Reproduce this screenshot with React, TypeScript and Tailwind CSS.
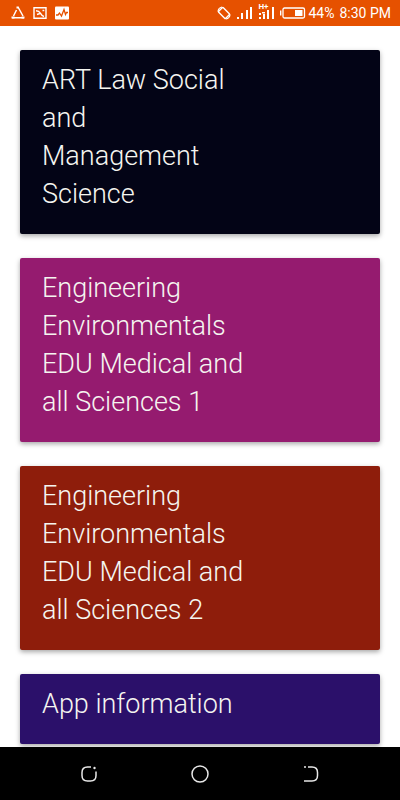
import React from "react";

type Category = { title: string; color: string };

const categories: Category[] = [
  { title: "ART Law Social and Management Science", color: "bg-[#030416]" },
  { title: "Engineering Environmentals EDU Medical and all Sciences 1", color: "bg-[#951b6f]" },
  { title: "Engineering Environmentals EDU Medical and all Sciences 2", color: "bg-[#8e1d0b]" },
  { title: "App information", color: "bg-[#2b106a]" },
];

function StatusBar() {
  return (
    <header className="flex h-[26px] shrink-0 items-center justify-between bg-[#e65100] pr-[9px] pl-[11px] text-white">
      <div className="flex items-center gap-2">
        <svg className="h-[14px] w-[14px]" viewBox="0 0 14 14" fill="none" stroke="currentColor">
          <path d="M7 1 12 10M5.500 4 2.500 10M1 11.700h12" strokeWidth="1.500" />
          <path d="M5.500 1.500h2.200M0.500 11.500h3M10.500 11.500h3" strokeWidth="2" />
        </svg>
        <svg className="h-[14px] w-[14px]" viewBox="0 0 14 14" fill="none" stroke="currentColor" strokeWidth="1.400">
          <path d="M1 1.700h12v10.600H1z" />
          <path d="M3 4.800c2.500 0 3.500.8 4.300 2.200S9 10 11 10.500" />
          <path d="M9.500 4.500h1.800M7 7.500 4 8.500" />
        </svg>
        <svg className="h-[14px] w-[14px]" viewBox="0 0 14 14" fill="none">
          <rect width="14" height="13" y="0.500" rx="1" fill="currentColor" />
          <path d="M1 9h2l1.500-2 2 3L9 3.500l1.500 5L11.500 6.500H13" stroke="#e65100" strokeWidth="1.300" />
        </svg>
      </div>
      <div className="flex items-center">
        <svg className="h-[14px] w-[14px]" viewBox="0 0 14 14" fill="none" stroke="currentColor" strokeWidth="1.400">
          <rect x="3.700" y="2" width="6.600" height="10" rx="0.800" transform="rotate(-45 7 7)" />
          <path d="M1 5.500C1.200 3 2.500 1.500 5 1M13 8.500c-.2 2.500-1.500 4-4 4.500" strokeWidth="1.200" />
        </svg>
        <svg className="ml-[6px] h-[18px] w-4" viewBox="0 0 16 18" fill="currentColor">
          <path d="M0 13h2v2H0zM4 9h2v6H4zM9 6h2v9H9zM13 3h2v12h-2z" />
        </svg>
        <div className="relative ml-[5px] h-[18px] w-4">
          <span className="absolute -top-[1px] left-0 text-[8px] leading-[8px] font-bold">H+</span>
          <svg className="h-[18px] w-4" viewBox="0 0 16 18" fill="currentColor">
            <path d="M1 13h2v2H1zM1 9h2v2H1zM4 8h3v1.500H4zM5 10h2v5H5zM9 6h2v9H9zM14 3h2v12h-2z" />
          </svg>
        </div>
        <svg className="ml-[6px] h-[12px] w-[26px]" viewBox="0 0 26 12" fill="none">
          <path d="M0.700 3.500v5" stroke="currentColor" strokeWidth="1.400" />
          <rect x="3" y="1" width="21.500" height="10" rx="1.500" stroke="currentColor" strokeWidth="1.300" />
          <path d="M15 3h7.500v6H15z" fill="currentColor" />
        </svg>
        <span className="ml-[2px] text-sm">44%</span>
        <time className="ml-[5px] text-sm">8:30 PM</time>
      </div>
    </header>
  );
}

function CategoryCard({ title, color }: Category) {
  return (
    <button
      type="button"
      className={`block w-full rounded-[2px] px-[22px] pt-[11px] pb-[21px] text-left shadow-[0_2px_5px_rgba(0,0,0,0.35)] ${color}`}
    >
      <span className="block max-w-[205px] text-[27px] leading-[38px] font-light text-[#f5f5f0]">{title}</span>
    </button>
  );
}

function NavigationBar() {
  return (
    <nav className="grid h-[53px] shrink-0 grid-cols-3 items-center justify-items-center bg-black px-[33px] text-[#e8e8e8]">
      <button type="button" aria-label="Recent apps">
        <svg className="h-4 w-4" viewBox="0 0 16 16" fill="none" stroke="currentColor" strokeWidth="1.500">
          <path d="M10 1H6.500Q1 1 1 6.500v3Q1 15 6.500 15h3q5.500 0 5.500-5.500V5.500" />
          <circle cx="13.500" cy="2" r="1.200" fill="currentColor" stroke="none" />
        </svg>
      </button>
      <button type="button" aria-label="Home">
        <svg className="h-[18px] w-[18px]" viewBox="0 0 18 18" fill="none" stroke="currentColor" strokeWidth="1.500">
          <circle cx="9" cy="9" r="8" />
        </svg>
      </button>
      <button type="button" aria-label="Back">
        <svg className="h-4 w-4" viewBox="0 0 16 16" fill="none" stroke="currentColor" strokeWidth="1.500">
          <path d="M1 1h2M5 1h4q5.500 0 5.500 5.500v3Q14.500 15 9 15H1" />
        </svg>
      </button>
    </nav>
  );
}

export default function App() {
  return (
    <div className="flex h-screen flex-col bg-white font-['Roboto',sans-serif]">
      <StatusBar />
      <main className="flex-1 overflow-y-auto px-5 pt-6">
        <ul className="flex flex-col gap-6">
          {categories.map((category) => (
            <li key={category.title}>
              <CategoryCard {...category} />
            </li>
          ))}
        </ul>
      </main>
      <NavigationBar />
    </div>
  );
}
